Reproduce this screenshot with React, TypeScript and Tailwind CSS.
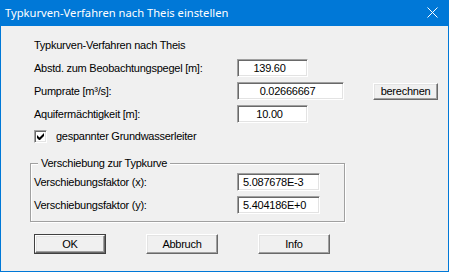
import React from 'react'

const sunken =
  'border border-t-[#a0a0a0] border-l-[#a0a0a0] border-r-white border-b-white shadow-[inset_1px_1px_#696969,inset_-1px_-1px_#e3e3e3] bg-white'

const raised =
  'border border-t-white border-l-white border-r-[#696969] border-b-[#696969] shadow-[inset_-1px_-1px_#a0a0a0,inset_1px_1px_#e3e3e3] bg-[#f0f0f0]'

function Field({ value, className, align = 'center' }: { value: string; className: string; align?: 'center' | 'left' }) {
  return (
    <div
      className={`${sunken} ${className} h-[18px] flex items-center leading-none ${
        align === 'center' ? 'justify-center pr-[6px]' : 'pl-[5px]'
      }`}
    >
      {value}
    </div>
  )
}

function Button({ label, className, isDefault }: { label: string; className: string; isDefault?: boolean }) {
  if (isDefault) {
    return (
      <div className={`border border-[#404040] ${className}`}>
        <div className={`${raised} w-full h-full flex items-center justify-center`}>{label}</div>
      </div>
    )
  }
  return <div className={`${raised} ${className} flex items-center justify-center`}>{label}</div>
}

function Row({ label, children }: { label: string; children: React.ReactNode }) {
  return (
    <div className="flex items-center h-[18px]">
      <div className="w-[203px] shrink-0">{label}</div>
      {children}
    </div>
  )
}

export default function App() {
  return (
    <div className="w-[449px] h-[272px] bg-[#0078d7] flex flex-col px-px pb-px font-['Liberation_Sans',Arial,sans-serif]">
      <div className="h-[26px] flex items-center justify-between pl-[4px] pr-[10px] text-white text-[11.2px] font-['Noto_Sans',sans-serif]">
        <span>Typkurven-Verfahren nach Theis einstellen</span>
        <svg width="11" height="11" viewBox="0 0 11 11" className="mb-px">
          <path d="M0.5 0.5 L10.5 10.5 M10.5 0.5 L0.5 10.5" stroke="white" strokeWidth="1" />
        </svg>
      </div>

      <div className="flex-1 bg-[#f0f0f0] text-black text-[11px] tracking-[-0.25px] pl-[33px] flex flex-col">
        <div className="mt-[13px] leading-[13px]">Typkurven-Verfahren nach Theis</div>

        <div className="mt-[7px] flex flex-col gap-[5px]">
          <Row label="Abstd. zum Beobachtungspegel [m]:">
            <Field value="139.60" className="w-[71px]" />
          </Row>
          <Row label="Pumprate [m³/s]:">
            <Field value="0.02666667" className="w-[107px]" />
            <Button label="berechnen" className="ml-[29px] w-[65px] h-[17px]" />
          </Row>
          <Row label="Aquifermächtigkeit [m]:">
            <Field value="10.00" className="w-[71px]" />
          </Row>
        </div>

        <label className="mt-[7px] flex items-center gap-[9px] h-[13px]">
          <span className={`${sunken} w-[13px] h-[13px] flex items-center justify-center`}>
            <svg width="7" height="7" viewBox="0 0 7 7">
              <path d="M0 2v3l2 2h1l4-4V0L2.5 4.5z" fill="black" />
            </svg>
          </span>
          <span>gespannter Grundwasserleiter</span>
        </label>

        <div className="relative mt-[20px] -ml-[4px] w-[315px] border border-[#a0a0a0] shadow-[1px_1px_white,inset_1px_1px_white] pt-[9px] pb-[7px] pl-[3px] flex flex-col gap-[5px]">
          <span className="absolute -top-[8px] left-[7px] px-[3px] bg-[#f0f0f0] leading-[14px]">Verschiebung zur Typkurve</span>
          <Row label="Verschiebungsfaktor (x):">
            <Field value="5.087678E-3" className="w-[83px]" align="left" />
          </Row>
          <Row label="Verschiebungsfaktor (y):">
            <Field value="5.404186E+0" className="w-[83px]" align="left" />
          </Row>
        </div>

        <div className="mt-[12px] flex gap-[40px]">
          <Button label="OK" className="w-[72px] h-[20px]" isDefault />
          <Button label="Abbruch" className="w-[72px] h-[20px]" />
          <Button label="Info" className="w-[72px] h-[20px]" />
        </div>
      </div>
    </div>
  )
}
